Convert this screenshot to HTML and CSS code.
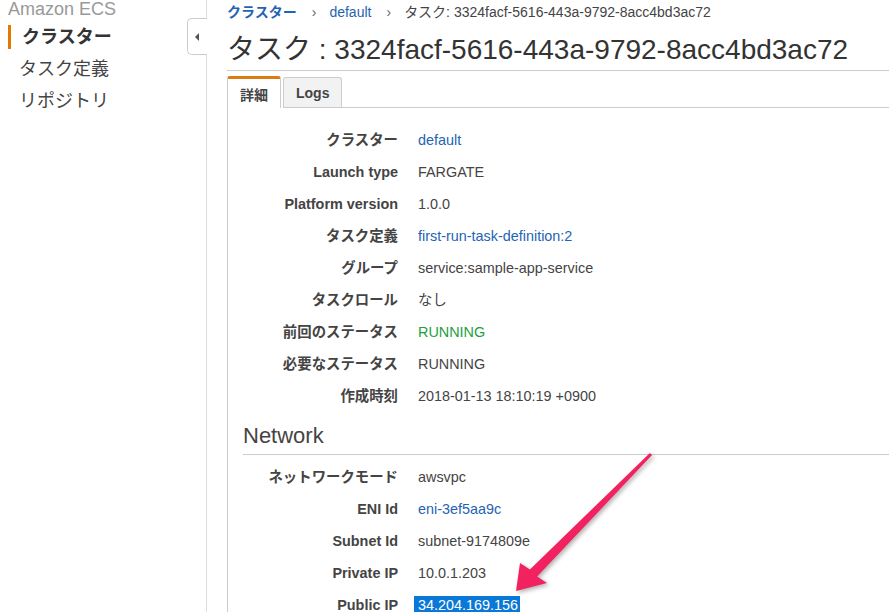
FILE: index.html
```html
<!DOCTYPE html>
<html lang="ja">
<head>
    <meta charset="UTF-8">
    <title>タスク : 3324facf-5616-443a-9792-8acc4bd3ac72</title>
    <link rel="stylesheet" href="styles.css">
</head>
<body>

<div class="layout">
    <div class="sidebar">
        <div class="side-title">Amazon ECS</div>
        <ul class="side-nav">
            <li class="active">クラスター</li>
            <li>タスク定義</li>
            <li>リポジトリ</li>
        </ul>
        <div class="collapse-tab"><span class="tri"></span></div>
    </div>

    <div class="main">
        <div class="breadcrumb">
            <a class="crumb-root">クラスター</a>
            <span class="sep">›</span>
            <a>default</a>
            <span class="sep">›</span>
            <span>タスク: 3324facf-5616-443a-9792-8acc4bd3ac72</span>
        </div>

        <h1 class="title">タスク : 3324facf-5616-443a-9792-8acc4bd3ac72</h1>

        <div class="tabs">
            <div class="tab active">詳細</div>
            <div class="tab">Logs</div>
            <div class="tab-rest"></div>
        </div>

        <div class="panel">
            <dl class="props">
                <dt>クラスター</dt><dd><a>default</a></dd>
                <dt>Launch type</dt><dd>FARGATE</dd>
                <dt>Platform version</dt><dd>1.0.0</dd>
                <dt>タスク定義</dt><dd><a>first-run-task-definition:2</a></dd>
                <dt>グループ</dt><dd>service:sample-app-service</dd>
                <dt>タスクロール</dt><dd>なし</dd>
                <dt>前回のステータス</dt><dd class="ok">RUNNING</dd>
                <dt>必要なステータス</dt><dd>RUNNING</dd>
                <dt>作成時刻</dt><dd>2018-01-13 18:10:19 +0900</dd>
            </dl>

            <h2 class="section">Network</h2>

            <dl class="props">
                <dt>ネットワークモード</dt><dd>awsvpc</dd>
                <dt>ENI Id</dt><dd><a>eni-3ef5aa9c</a></dd>
                <dt>Subnet Id</dt><dd>subnet-9174809e</dd>
                <dt>Private IP</dt><dd>10.0.1.203</dd>
                <dt>Public IP</dt><dd><span class="selected">34.204.169.156</span></dd>
            </dl>
        </div>
    </div>
</div>

<!-- 注釈の矢印 -->
<svg class="arrow" width="889" height="612" viewBox="0 0 889 612">
    <polygon points="649.9,452.9 529.9,569.5 520,563 516,591 547,583 537.1,576.5 652.1,455.1" fill="#f2215f"/>
</svg>

</body>
</html>
```

FILE: styles.css
```css
body {
    margin: 0;
    font-family: "Liberation Sans", Arial, "Noto Sans CJK JP", sans-serif;
    font-size: 14px;
    color: #444;
    background: #fff;
    overflow: hidden;
    height: 612px;
}

a {
    color: #1f64b1;
    text-decoration: none;
}

.layout {
    display: flex;
    height: 612px;
}

/* サイドバー */
.sidebar {
    position: relative;
    width: 207px;
    flex: none;
    border-right: 1px solid #ddd;
    padding-left: 8px;
    box-sizing: border-box;
}

.side-title {
    font-size: 18px;
    line-height: 20px;
    margin-top: -1px;
    color: #999;
}

.side-nav {
    list-style: none;
    margin: 6px 0 0;
    padding: 0;
    display: flex;
    flex-direction: column;
    gap: 8px;
}

.side-nav li {
    font-size: 18px;
    line-height: 24px;
    padding-left: 11px;
    color: #444;
}

.side-nav li.active {
    border-left: 3px solid #e07a00;
    font-weight: bold;
    color: #333;
}

.collapse-tab {
    position: absolute;
    top: 18px;
    right: -1px;
    width: 19px;
    height: 35px;
    border: 1px solid #ccc;
    border-right: none;
    border-radius: 5px 0 0 5px;
    background: #fff;
    display: flex;
    align-items: center;
    justify-content: center;
}

.tri {
    width: 0;
    height: 0;
    border-top: 4px solid transparent;
    border-bottom: 4px solid transparent;
    border-right: 4px solid #555;
    margin-left: -1px;
}

/* メイン */
.main {
    flex: 1;
    padding-left: 20px;
    min-width: 0;
}

.breadcrumb {
    display: flex;
    margin-top: 2px;
    line-height: 20px;
    white-space: nowrap;
    color: #444;
}

.crumb-root {
    font-weight: bold;
}

.sep {
    color: #666;
    margin: 0 13px 0 15px;
}

.title {
    margin: 11px 0 0;
    font-size: 28px;
    font-weight: normal;
    line-height: 34px;
    color: #333;
    padding-bottom: 3px;
    border-bottom: 1px solid #ccc;
    white-space: nowrap;
}

.tabs {
    display: flex;
    align-items: flex-end;
    margin-top: 5px;
    height: 32px;
}

.tab {
    box-sizing: border-box;
    height: 31px;
    padding: 0 12px;
    border: 1px solid #ccc;
    border-bottom: none;
    border-radius: 3px 3px 0 0;
    background: #f2f2f2;
    font-weight: bold;
    display: flex;
    align-items: center;
    color: #444;
    margin-right: 2px;
    box-shadow: inset 0 -1px 0 #ccc;
}

.tab.active {
    height: 32px;
    background: #fff;
    border-top: 3px solid #dd7b14;
    box-shadow: none;
    padding-top: 1px;
}

.tab-rest {
    flex: 1;
    align-self: stretch;
    border-bottom: 1px solid #ccc;
    margin-left: -2px;
}

.panel {
    border-left: 1px solid #ccc;
    padding-top: 16px;
    height: 600px;
}

.props {
    display: grid;
    grid-template-columns: 170px 1fr;
    column-gap: 20px;
    margin: 0;
}

.props dt,
.props dd {
    margin: 0;
    font-size: 14.4px;
    line-height: 32px;
    white-space: nowrap;
}

.props dt {
    text-align: right;
    font-weight: bold;
    color: #444;
}

.ok {
    color: #22a03e;
}

.section {
    margin: 11px 0 6px 15px;
    font-size: 22px;
    font-weight: normal;
    line-height: 26px;
    color: #444;
    padding-bottom: 5px;
    border-bottom: 1px solid #ccc;
}

.selected {
    background: #0a78d6;
    color: #fff;
    margin-left: -4px;
    padding: 1px 2px 1px 4px;
}

.arrow {
    position: absolute;
    left: 0;
    top: 0;
    pointer-events: none;
    filter: drop-shadow(2px 2px 2px rgba(0, 0, 0, 0.3));
}
```
